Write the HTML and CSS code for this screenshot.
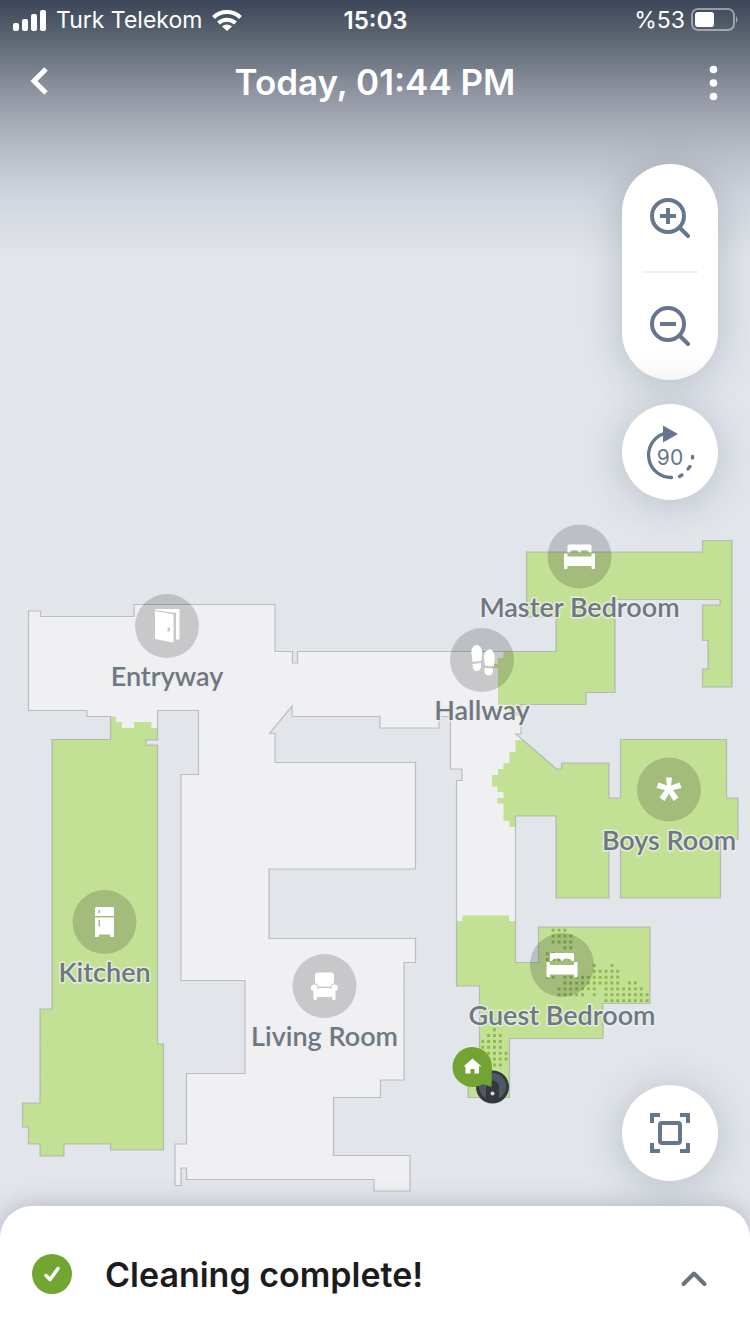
FILE: index.html
```html
<!DOCTYPE html>
<html lang="en">
<head>
<meta charset="utf-8">
<meta name="viewport" content="width=device-width, initial-scale=1">
<title>Cleaning report</title>
<link rel="stylesheet" href="styles.css">
</head>
<body>
<div class="screen">
  <svg class="map" viewBox="0 0 750 1334" preserveAspectRatio="xMidYMid slice" role="img" aria-label="Map of cleaned rooms">
    <defs>
      <path id="outline" d="M28.500 611H40.500V616.500H134V604.500H275V651.500H292.500V663H297.500V651.500H556V617H526.500V552H702.500V540.500H732V687H702.500V669H708V640.500H702.500V605H720V599.500H615V692.500H586V704.500H521V734H516L556.500 769H561.500V763H609V798H620.500V739.500H726.500V798H738V839H720.500V898H620.500V846H609V898H556V816H515.500V962.500H538.500V927H650V1003.500H603V1038.500H509.500V1097.500H468V1080H479.500V986H456.500V780.500H462V769H450.500V716.500H439V728H380V716.500H292V706L269.500 733.500H275V762.500H415.500V869H269V938.500H415.500V962.500H404V1080H380.500V1097.500H333.500V1155.500H410V1191H374V1179.500H186.500V1168H181V1185.500H175V1144H186.500V1073.500H245V980.500H181V774.500H198.500V710.500H157.500V740H146V745H157.500V1044H163.500V1150H110.500V1144H64V1156H40V1144H28.500V1127H22.500V1103H40V1009H52V739.500H110.500V716.500H87V710.500H28.500Z"/>
      <clipPath id="inside"><use href="#outline"/></clipPath>
      <g id="bed">
        <path d="M-12-4V-10.500Q-12-12-10.500-12H10.500Q12-12 12-10.500V-4H10Q9-6.500 6-6.500H4Q1-6.500 .5-4H-.5Q-1-6.500-4-6.500H-6Q-9-6.500-10-4Z"/>
        <path d="M-15.500-2Q-15.500-3-14.500-3H-13Q-12-3-12-2V0H12V-2Q12-3 13-3H14.500Q15.500-3 15.500-2V11.500Q15.500 12.500 14.500 12.500H13Q12 12.500 12 11.500V9.500H-12V11.500Q-12 12.500-13 12.500H-14.500Q-15.500 12.500-15.500 11.500Z"/>
      </g>
    </defs>

    <use href="#outline" class="floor"/>
    <g class="cleaned" clip-path="url(#inside)">
      <path d="M503.500 651H526V540H740V700H600V705H521V716H509V705H498V668H492V664H498V658H503.500Z"/>
      <path d="M515.500 740H523L560 735H745V905H540V827H509.500V821H503.500V803.500H497.500V798H503.500V792H497.500V786.500H492V775H498V769H503.500V763H509.500V752H515.500Z"/>
      <path d="M450 921H462.500V915.500H509V921H520V925H660V1105H450Z"/>
      <path d="M110 716.500H116V722H122V728H134V722H151.500V728H170V1160H15V735H110Z"/>
    </g>
    <use href="#outline" class="walls"/>

    <g class="dirt">
      <path transform="translate(547.3 930.2) scale(5.870)" d="M.75 0h2.500M.75 1h3.500M.75 2h3.500M2.750 3h1.500M-.25 4h1.500M-.25 5h2.500M-.25 6h.5M7.750 6h.5M10.750 6h.5M7.750 7h4.500M-.25 8h1.500M2.750 8h9.500M2.750 9h9.500M13.750 9h1.500M1.750 10h6.500M9.750 10h6.500M1.750 11h4.500M7.750 11h.5M9.750 11h7.500M9.750 12h7.500"/>
      <path transform="translate(482.7 1029.7) scale(5.870)" d="M1.750 0h.5M.75 1h2.500M-.25 2h3.500M-.25 3h3.500M-.25 4h4.500M.75 5h3.500M1.750 6h1.500"/>
    </g>

    <g class="robot">
      <circle class="robot-rim" cx="492.500" cy="1087" r="16.500"/>
      <circle class="robot-top" cx="492.500" cy="1086.500" r="13.500"/>
      <path class="robot-rim" d="M486 1101V1087a6.500 6.500 0 0 1 13 0V1101Z"/>
      <circle class="robot-light" cx="492.500" cy="1093.500" r="2"/>
    </g>
    <g class="dock">
      <path class="dock-pin" d="M472 1047a20 20 0 0 1 20 20L491.500 1087 483 1084A20 20 0 1 1 472 1047Z"/>
      <path class="dock-house" d="M472.500 1058.500L481.500 1066.500H479V1073.500H474.500V1069H470.500V1073.500H465.500V1066.500H463.500Z"/>
    </g>

    <g class="room" transform="translate(579.5 556.5)">
      <circle r="32"/><use href="#bed"/><text y="60">Master Bedroom</text>
    </g>
    <g class="room" transform="translate(167 626)">
      <circle r="32"/>
      <path d="M-12-17H12.500V13.500H9V-13.500H4L-12-16Z"/>
      <path fill-rule="evenodd" d="M-12-15L6.500-11.500V16.500L-12 13ZM.5 1.500V5.500H3V1.500Z"/>
      <text y="60">Entryway</text>
    </g>
    <g class="room" transform="translate(482 660)">
      <circle r="32"/>
      <path d="M-5.500-15C-9-15-11-11-10.500-6L-9.500 2L-1 1C0-3 0-6 0-8C0-12-2.500-15-5.500-15ZM-9.500 4L-1 3V7C-1 12-8.500 12.500-9 8Z"/>
      <path d="M7.500-10.500C4-10.500 2-6.500 2-2.500L3 5.500L11.500 6.500C12.500 2 13-1 12.500-4C12-8 10.500-10.500 7.500-10.500ZM2.500 8L11 8.500V11.500C10.500 17 3 16.500 2.500 12Z"/>
      <text y="60">Hallway</text>
    </g>
    <g class="room" transform="translate(669 789.5)">
      <circle r="32"/>
      <path d="M-3-12H3L2-4L10.500-7L12.500-1.500L4 .5L9.500 8L4.500 11.500L0 4L-4.500 11.500L-9.500 8L-4 .5L-12.500-1.500L-10.500-7L-2-4Z"/>
      <text y="60">Boys Room</text>
    </g>
    <g class="room" transform="translate(104.5 922)">
      <circle r="32"/>
      <path fill-rule="evenodd" d="M-8.500-15H8.500L9.500-14V-6H-9.500V-14ZM-6-12V-9H-4.500V-12ZM-9.500-4.500H9.500V15H6L5 12.500H-5L-6 15H-9.500ZM-6-2V4.500H-4.500V-2Z"/>
      <text y="60">Kitchen</text>
    </g>
    <g class="room" transform="translate(324.5 986)">
      <circle r="32"/>
      <path d="M-9.500-10.500Q-9.500-13.500-6.500-13.500H6.500Q9.500-13.500 9.500-10.500V-3Q6.500-2 6.300 .5H-6.300Q-6.500-2-9.500-3Z"/>
      <path d="M-10.500-1.500C-7.500-1.500-7 0-7 2.500V3.500Q-6 2-5 2H5Q6 2 7 3.500V2.500C7 0 7.500-1.500 10.500-1.500C14.500-1 14.500 4 11 5V13Q11 14 10 14H8.500Q7.500 14 7.500 11H-7.500Q-7.500 14-8.500 14H-10Q-11 14-11 13V5C-14.500 4-14.500-1-10.500-1.500Z"/>
      <text y="60">Living Room</text>
    </g>
    <g class="room" transform="translate(562 965)">
      <circle r="32"/><use href="#bed"/><text y="60">Guest Bedroom</text>
    </g>
  </svg>

  <header class="top">
    <div class="status">
      <div class="status-side">
        <svg width="34" height="22" viewBox="0 0 34 22" fill="#fff" aria-hidden="true"><rect x="1" y="14" width="6" height="8" rx="2"/><rect x="10" y="10" width="6" height="12" rx="2"/><rect x="19" y="5" width="6" height="17" rx="2"/><rect x="28" y="1" width="6" height="21" rx="2"/></svg>
        <span>Turk Telekom</span>
        <svg width="30" height="22" viewBox="0 0 30 22" aria-hidden="true"><g fill="none" stroke="#fff" stroke-width="4"><path d="M1.500 8.500a19.500 19.500 0 0 1 27 0"/><path d="M6.500 14a12.500 12.500 0 0 1 17 0"/></g><path fill="#fff" d="M15 22L10 17.500a7.500 7.500 0 0 1 10 0Z"/></svg>
      </div>
      <time class="clock">15:03</time>
      <div class="status-side status-end">
        <span>%53</span>
        <svg width="48" height="24" viewBox="0 0 48 24" aria-hidden="true"><rect x="1" y="1" width="42" height="21" rx="6" fill="none" stroke="#fff" stroke-opacity=".45" stroke-width="2"/><rect x="4" y="4" width="19" height="15" rx="3" fill="#fff"/><path d="M45 8q3 3.500 0 7Z" fill="#fff" fill-opacity=".5"/></svg>
      </div>
    </div>
    <nav class="nav">
      <button class="icon-button" type="button" aria-label="Back"><svg width="48" height="48" viewBox="0 0 48 48" fill="none" stroke="#fff" stroke-width="5"><path d="M30 11L18 23L30 35"/></svg></button>
      <h1 class="title">Today, 01:44 PM</h1>
      <button class="icon-button" type="button" aria-label="More options"><svg width="48" height="48" viewBox="0 0 48 48" fill="#fff"><circle cx="27.500" cy="11.500" r="3.800"/><circle cx="27.500" cy="25" r="3.800"/><circle cx="27.500" cy="38.500" r="3.800"/></svg></button>
    </nav>
  </header>

  <main class="controls">
    <div class="zoom">
      <button class="zoom-button" type="button" aria-label="Zoom in"><svg width="40" height="40" viewBox="0 0 40 40"><circle cx="18" cy="18" r="16"/><path d="M10 18H26M18 10V26"/><path stroke-linecap="round" d="M30 30L38 38"/></svg></button>
      <button class="zoom-button" type="button" aria-label="Zoom out"><svg width="40" height="40" viewBox="0 0 40 40"><circle cx="18" cy="18" r="16"/><path d="M10 18H26"/><path stroke-linecap="round" d="M30 30L38 38"/></svg></button>
    </div>
    <button class="round" type="button" aria-label="Rotate 90 degrees">
      <svg width="56" height="56" viewBox="0 0 56 56"><g stroke-width="3.300" stroke-linecap="round"><path d="M21 10A22.500 22.500 0 0 0 29.500 53.500"/><path d="M37.500 52.500L40 51M46 45L48 42.500M50.500 34V32.500"/></g><path class="solid" d="M21 1.500L36 10L21 18.500Z"/><text class="degrees" x="28" y="41">90</text></svg>
    </button>
    <button class="round fit" type="button" aria-label="Fit map to screen">
      <svg width="40" height="40" viewBox="0 0 40 40"><path d="M2 10V2H10M30 2H38V10M38 30V38H30M10 38H2V30"/><rect x="10" y="10" width="20" height="20" rx="2"/></svg>
    </button>
  </main>

  <section class="sheet">
    <svg width="40" height="40" viewBox="0 0 40 40" aria-hidden="true"><circle cx="20" cy="20" r="20" fill="#73a533"/><path d="M14 21.500L18 25.500L26 14.500" fill="none" stroke="#fff" stroke-width="3.500" stroke-linecap="round" stroke-linejoin="round"/></svg>
    <h2 class="message">Cleaning complete!</h2>
    <button class="icon-button" type="button" aria-label="Show details"><svg width="48" height="48" viewBox="0 0 48 48" fill="none" stroke="#6b727d" stroke-width="4" stroke-linecap="round" stroke-linejoin="round"><path d="M13.500 34L24 23.500L34.500 34"/></svg></button>
  </section>
</div>
</body>
</html>
```
FILE: styles.css
```css
* {
  box-sizing: border-box;
}

body {
  margin: 0;
  font-family: Inter, "Liberation Sans", sans-serif;
  background: #e2e6eb;
}

button {
  padding: 0;
  border: 0;
  background: none;
  font: inherit;
  cursor: pointer;
}

svg {
  display: block;
  flex: none;
}

.screen {
  position: relative;
  display: flex;
  flex-direction: column;
  min-height: 100vh;
  overflow: hidden;
  background: #e2e6eb;
}

/* Map canvas, under all controls */
.map {
  position: absolute;
  inset: 0;
  width: 100%;
  height: 100%;
}

.floor { fill: #f0f0f2; }
.cleaned { fill: #c3e195; }

.walls {
  fill: none;
  stroke: #9aa0a8;
  stroke-opacity: 0.6;
  stroke-width: 1.2;
}

.dirt {
  fill: none;
  stroke: #8fb94d;
  stroke-width: 0.5;
  stroke-dasharray: 0.5 0.5;
}

.robot-rim { fill: #34383e; }
.robot-top { fill: #4f5965; }
.robot-light { fill: #d5d8dc; }
.dock-pin { fill: #73a332; }
.dock-house { fill: #fff; }

.room { fill: #fff; }

.room circle {
  fill: #000;
  fill-opacity: 0.165;
}

.room text {
  font-family: Lato, "Noto Sans", sans-serif;
  font-size: 27px;
  font-weight: 600;
  text-anchor: middle;
  fill: #6f7781;
  stroke: #eceef0;
  stroke-opacity: 0.8;
  stroke-width: 3;
  stroke-linejoin: round;
  paint-order: stroke;
}

/* Status bar and title */
.top {
  position: relative;
  color: #fff;
}

.top::before {
  content: "";
  position: absolute;
  inset: 0 0 auto;
  height: 260px;
  background: linear-gradient(#3c4659 0, #57606d 32px, #6f7884 60px, #9094a1 92px, #a8adb7 126px, #bbbfc9 155px, #d0d4dc 195px, rgba(226, 230, 235, 0) 260px);
}

.status,
.nav {
  position: relative;
  display: grid;
  grid-template-columns: 1fr auto 1fr;
  align-items: center;
}

.status {
  height: 40px;
  padding: 0 11px 0 12px;
  font-size: 23px;
}

.status-side {
  display: flex;
  align-items: center;
  gap: 10px;
}

.status-end {
  justify-content: flex-end;
  gap: 6px;
}

.clock {
  font-size: 24px;
  font-weight: 600;
}

.nav {
  height: 84px;
  padding: 0 16px;
}

.nav .icon-button:last-child { justify-self: end; }

.icon-button {
  display: grid;
  place-items: center;
  width: 48px;
  height: 48px;
}

.title,
.message {
  margin: 0;
  font-weight: 600;
}

.title { font-size: 35px; }

/* Map controls */
.controls {
  position: relative;
  flex: 1;
  display: flex;
  flex-direction: column;
  align-items: flex-end;
  gap: 24px;
  padding: 40px 32px 25px;
}

.controls svg {
  fill: none;
  stroke: #66768f;
  stroke-width: 4;
}

.controls .solid {
  fill: #66768f;
  stroke: none;
}

.controls .degrees {
  font-size: 21px;
  text-anchor: middle;
  fill: #66768f;
  stroke: none;
}

.zoom,
.round {
  width: 96px;
  border-radius: 48px;
  background: #fff;
  box-shadow: 0 4px 40px rgba(80, 92, 112, 0.3);
}

.zoom {
  padding-bottom: 2px;
  background: linear-gradient(#fff 85%, #f8f8f8);
}

.zoom-button {
  display: grid;
  place-items: center;
  width: 56px;
  height: 107px;
  margin: 0 auto;
}

.zoom-button + .zoom-button { border-top: 2px solid #f0f0f2; }

.round {
  display: grid;
  place-items: center;
  height: 96px;
}

.fit { margin-top: auto; }

/* Result sheet */
.sheet {
  position: relative;
  display: flex;
  align-items: center;
  gap: 33px;
  padding: 44px 32px 36px;
  border-radius: 32px 32px 0 0;
  background: #fff;
  box-shadow: 0 0 24px rgba(80, 84, 96, 0.35);
}

.message {
  flex: 1;
  font-size: 34px;
  color: #1c1c1e;
}
```
